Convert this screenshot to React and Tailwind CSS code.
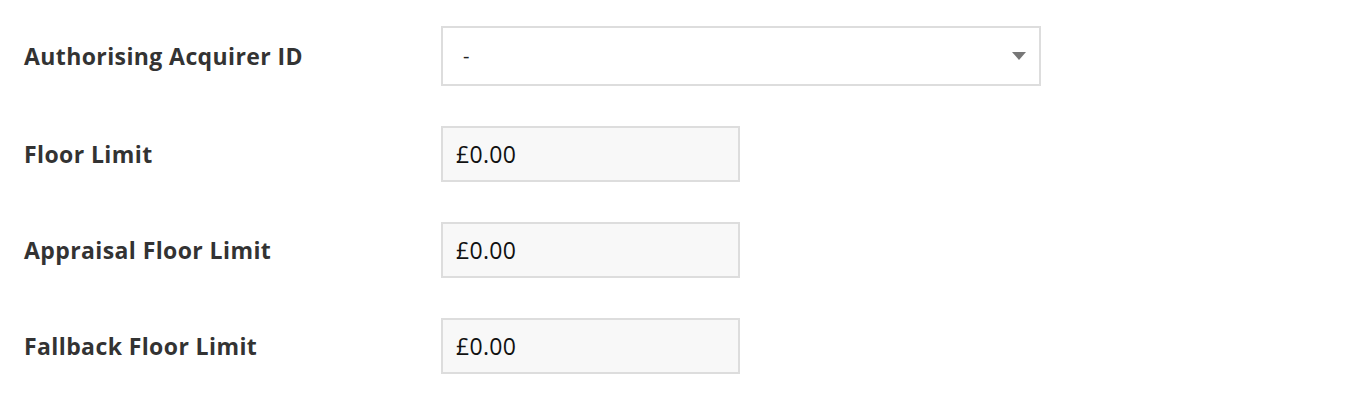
import React from 'react';

const rows = [
  { label: 'Floor Limit', value: '£0.00' },
  { label: 'Appraisal Floor Limit', value: '£0.00' },
  { label: 'Fallback Floor Limit', value: '£0.00' },
];

const App = () => {
  return (
    <div className="min-h-screen bg-white pl-6 pt-[26px] font-['Open_Sans',sans-serif] text-[#333]">
      <div className="flex flex-col gap-10">
        {/* Acquirer select */}
        <div className="flex items-center">
          <label className="w-[417px] text-[23px] font-bold leading-[30px] tracking-[0.4px]">Authorising Acquirer ID</label>
          <div className="flex h-[60px] w-[600px] items-center justify-between border-2 border-[#dddddd] bg-white pl-[20px] pr-[12px]">
            <span className="text-[20px] text-[#222]">-</span>
            <svg width="14" height="9" viewBox="0 0 14 9" className="mr-[1px]">
              <path d="M0 0 L14 0 L7 8 Z" fill="#777777" />
            </svg>
          </div>
        </div>

        {rows.map((row) => (
          <div key={row.label} className="flex items-center">
            <label className="w-[417px] text-[23px] font-bold leading-[30px] tracking-[0.4px]">{row.label}</label>
            <div className="flex h-[56px] w-[299px] items-center border-2 border-[#dddddd] bg-[#f8f8f8] px-[13px]">
              <span className="text-[23px] leading-[30px] tracking-[0.3px] text-[#111]">{row.value}</span>
            </div>
          </div>
        ))}
      </div>
    </div>
  );
};

export default App;
